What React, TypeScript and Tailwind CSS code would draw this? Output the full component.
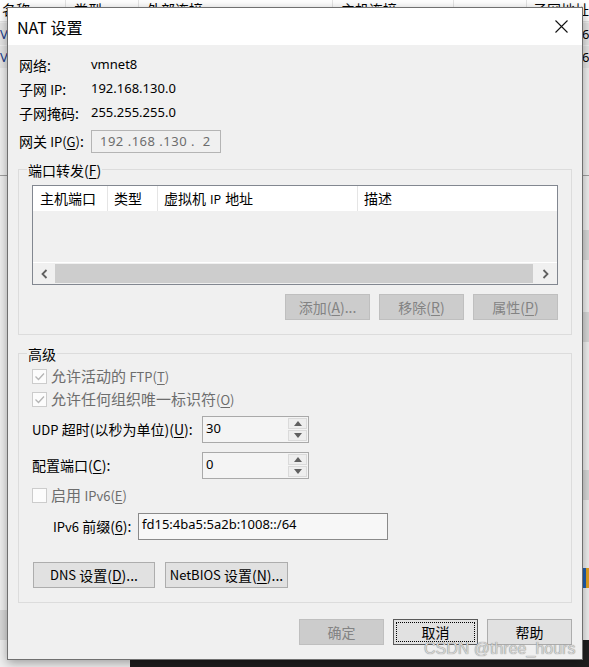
import React from "react";

const U = ({ c }: { c: string }) => <span className="underline underline-offset-[2px]">{c}</span>;

function Check({ checked }: { checked?: boolean }) {
  return (
    <div className="w-[15px] h-[15px] border border-[#cccccc] bg-[#fcfcfc] flex items-center justify-center">
      {checked && (
        <svg width="13" height="13" viewBox="0 0 13 13">
          <path d="M2.5 6.5 L5.5 9.5 L11 3.5" stroke="#b4b4b4" strokeWidth="1.3" fill="none" />
        </svg>
      )}
    </div>
  );
}

function Btn({ children, disabled, focus, w = "w-[85px]" }: { children: React.ReactNode; disabled?: boolean; focus?: boolean; w?: string }) {
  return (
    <div
      className={
        w +
        " h-[26px] border flex items-center justify-center " +
        (disabled ? "bg-[#cccccc] border-[#bfbfbf] text-[#838383]" : focus ? "bg-[#e1e1e1] border-[#5a5a5a] text-black p-[2px]" : "bg-[#e1e1e1] border-[#adadad] text-black")
      }
    >
      {focus ? <div className="w-full h-full border border-dotted border-black flex items-center justify-center">{children}</div> : children}
    </div>
  );
}

function Spin({ value }: { value: string }) {
  return (
    <div className="w-[107px] h-[27px] border border-[#a9a9a9] bg-[#f4f4f4] flex">
      <div className="flex-1 pl-[3px] pt-[2px] text-[13px] font-['Noto_Sans',sans-serif] leading-[18px]">{value}</div>
      <div className="w-[19px] my-[1px] mr-[1px] flex flex-col gap-[1px]">
        <div className="flex-1 bg-[#eeeeee] border border-[#dadada] flex items-center justify-center">
          <svg width="8" height="5" viewBox="0 0 8 5"><path d="M0 5 L4 0 L8 5 Z" fill="#606060" /></svg>
        </div>
        <div className="flex-1 bg-[#eeeeee] border border-[#dadada] flex items-center justify-center">
          <svg width="8" height="5" viewBox="0 0 8 5"><path d="M0 0 L4 5 L8 0 Z" fill="#606060" /></svg>
        </div>
      </div>
    </div>
  );
}

function Group({ title, children, className = "" }: { title: React.ReactNode; children: React.ReactNode; className?: string }) {
  return (
    <div className={"relative border border-[#dcdcdc] " + className}>
      <span className="absolute left-[8px] top-[-10px] h-[20px] leading-[20px] px-[1px] bg-[#f0f0f0]">{title}</span>
      {children}
    </div>
  );
}

const num = "text-[13px] font-['Noto_Sans',sans-serif]";

export default function App() {
  return (
    <div className="relative w-[589px] h-[667px] overflow-hidden bg-[#f0f0f0] font-['Noto_Sans_CJK_SC','Noto_Sans',sans-serif] text-[14px] text-black">
      {/* window behind */}
      <div className="absolute left-0 top-0 w-full h-[22px] bg-white border-b border-[#e5e5e5] flex text-[14px] leading-[14px] overflow-hidden">
        <div className="w-[68px] border-r border-[#e5e5e5] pl-[2px] pt-[2px]">名称</div>
        <div className="w-[75px] border-r border-[#e5e5e5] pl-[8px] pt-[2px]">类型</div>
        <div className="w-[200px] border-r border-[#e5e5e5] pl-[8px] pt-[2px]">外部连接</div>
        <div className="w-[125px] border-r border-[#e5e5e5] pl-[8px] pt-[2px]">主机连接</div>
        <div className="w-[75px] border-r border-[#e5e5e5]" />
        <div className="flex-1 pl-[6px] pt-[2px] whitespace-nowrap">子网地址</div>
      </div>
      <div className="absolute left-0 top-[23px] w-full h-[22px] bg-[#e5e5e5] text-[13px] leading-[22px] font-['Noto_Sans',sans-serif] text-[#1a3a8a] flex justify-between">
        <span className="w-[7px] overflow-hidden">V</span><span className="w-[7px] overflow-hidden text-black">6</span>
      </div>
      <div className="absolute left-0 top-[46px] w-full h-[22px] bg-[#e5e5e5] text-[13px] leading-[22px] font-['Noto_Sans',sans-serif] text-[#1a3a8a] flex justify-between">
        <span className="w-[7px] overflow-hidden">V</span><span className="w-[7px] overflow-hidden text-black">6</span>
      </div>
      <div className="absolute left-0 top-[175px] w-full h-[1px] bg-[#a0a0a0]" />
      <div className="absolute right-0 top-[230px] w-[7px] h-[30px] bg-[#d8d8d8]" />
      <div className="absolute right-0 top-[312px] w-[7px] h-[30px] bg-[#d8d8d8]" />
      <div className="absolute right-0 top-[470px] w-[7px] h-[30px] bg-[#d8d8d8]" />
      <div className="absolute left-0 top-[610px] w-[7px] h-[30px] bg-[#d8d8d8]" />
      <div className="absolute right-0 top-[568px] w-[7px] h-[20px] bg-[linear-gradient(90deg,#1f5fb0_50%,#e0a020_50%)]" />
      <div className="absolute left-[130px] top-[640px] right-0 bottom-0 bg-[#1f1f1f]" />

      {/* dialog */}
      <div className="absolute left-[7px] top-[7px] w-[576px] h-[653px] border border-[#707070] bg-[#f0f0f0] shadow-[0_3px_10px_rgba(0,0,0,0.35)] flex flex-col">
        <div className="h-[37px] bg-white flex items-center justify-between pl-[9px] pr-[14px]">
          <span className="text-[16px]">NAT 设置</span>
          <svg width="13" height="13" viewBox="0 0 13 13">
            <path d="M0.5 0.5 L12.5 12.5 M12.5 0.5 L0.5 12.5" stroke="#111" strokeWidth="1.1" />
          </svg>
        </div>

        <div className="flex-1 flex flex-col px-[10px] pt-[8px]">
          <div className="h-[24px] flex items-center">
            <span className="w-[73px] pl-[1px]">网络:</span>
            <span className={num}>vmnet8</span>
          </div>
          <div className="h-[24px] flex items-center">
            <span className="w-[73px] pl-[1px]">子网 <span className="text-[13px]">IP</span>:</span>
            <span className={num}>192.168.130.0</span>
          </div>
          <div className="h-[24px] flex items-center">
            <span className="w-[73px] pl-[1px]">子网掩码:</span>
            <span className={num}>255.255.255.0</span>
          </div>
          <div className="mt-[5px] flex items-center">
            <span className="w-[73px] pl-[1px]">网关 <span className="text-[13px]">IP(<U c="G" />)</span>:</span>
            <div className="w-[130px] h-[23px] border border-[#b4b4b4] bg-[#f0f0f0] pl-[8px] flex items-center text-[13px] text-[#6d6d6d] font-['Noto_Sans',sans-serif] tracking-[0.5px]">
              192 .168 .130 .&nbsp; 2
            </div>
          </div>

          <Group className="mt-[16px] px-[13px] pt-[15px] pb-[14px]" title={<>端口转发(<U c="F" />)</>}>
            <div className="h-[100px] border border-[#828790] flex flex-col">
              <div className="h-[25px] bg-white flex items-center">
                <div className="w-[75px] h-full border-r border-[#e5e5e5] pl-[7px] flex items-center">主机端口</div>
                <div className="w-[50px] h-full border-r border-[#e5e5e5] pl-[6px] flex items-center">类型</div>
                <div className="w-[200px] h-full border-r border-[#e5e5e5] pl-[6px] flex items-center">虚拟机 <span className="text-[12px] mx-[4px]">IP</span> 地址</div>
                <div className="flex-1 h-full pl-[6px] flex items-center">描述</div>
              </div>
              <div className="flex-1 bg-[#f0f0f0]" />
              <div className="h-[22px] border-t border-white bg-[#f0f0f0] flex items-center">
                <div className="w-[22px] flex justify-center">
                  <svg width="7" height="10" viewBox="0 0 7 10"><path d="M5.5 1 L1.5 5 L5.5 9" stroke="#606060" strokeWidth="1.8" fill="none" /></svg>
                </div>
                <div className="flex-1 h-[19px] bg-[#cdcdcd]" />
                <div className="w-[24px] flex justify-center">
                  <svg width="7" height="10" viewBox="0 0 7 10"><path d="M1.5 1 L5.5 5 L1.5 9" stroke="#606060" strokeWidth="1.8" fill="none" /></svg>
                </div>
              </div>
            </div>
            <div className="mt-[9px] flex justify-end gap-[9px]">
              <Btn disabled>添加(<U c="A" />)...</Btn>
              <Btn disabled>移除(<U c="R" />)</Btn>
              <Btn disabled>属性(<U c="P" />)</Btn>
            </div>
          </Group>

          <Group className="mt-[18px] px-[13px] pt-[11px] pb-[14px]" title="高级">
            <div className="h-[23px] flex items-center gap-[4px] text-[#6d6d6d]">
              <Check checked />
              <span className="text-[15px]">允许活动的 <span className="text-[13px]">FTP(<U c="T" />)</span></span>
            </div>
            <div className="h-[23px] flex items-center gap-[4px] text-[#6d6d6d]">
              <Check checked />
              <span className="text-[15px]">允许任何组织唯一标识符<span className="text-[13px]">(<U c="O" />)</span></span>
            </div>
            <div className="mt-[5px] flex items-center">
              <span className="w-[170px]"><span className="text-[13px]">UDP</span> 超时(以秒为单位)(<U c="U" />):</span>
              <Spin value="30" />
            </div>
            <div className="mt-[9px] flex items-center">
              <span className="w-[170px]">配置端口(<U c="C" />):</span>
              <Spin value="0" />
            </div>
            <div className="mt-[5px] h-[23px] flex items-center gap-[4px] text-[#6d6d6d]">
              <Check />
              <span className="text-[15px]">启用 <span className="text-[13px]">IPv6(<U c="E" />)</span></span>
            </div>
            <div className="mt-[6px] flex items-center pl-[21px]">
              <span className="w-[85px]"><span className="text-[13px]">IPv6</span> 前缀(<U c="6" />):</span>
              <div className="w-[250px] h-[27px] border border-[#8a8a8a] bg-[#f7f7f7] pl-[3px] pt-[1px] text-[13px] leading-[18px] font-['Noto_Sans',sans-serif]">
                fd15:4ba5:5a2b:1008::/64
              </div>
            </div>
            <div className="mt-[22px] ml-[1px] flex gap-[10px]">
              <Btn w="w-[122px]"><span className="text-[13px]">DNS</span>&nbsp;设置(<U c="D" />)...</Btn>
              <Btn w="w-[123px]"><span className="text-[13px]">NetBIOS</span>&nbsp;设置(<U c="N" />)...</Btn>
            </div>
          </Group>

          <div className="mt-[16px] flex justify-end gap-[9px]">
            <Btn disabled>确定</Btn>
            <Btn focus>取消</Btn>
            <Btn>帮助</Btn>
          </div>
        </div>
      </div>

      <div className="absolute left-[424px] top-[638px] text-[16px] leading-[22px] font-['Liberation_Sans',sans-serif] text-[#d4d4d4] [text-shadow:0_0_1px_#6a6a6a]">
        CSDN @three_hours
      </div>
    </div>
  );
}
